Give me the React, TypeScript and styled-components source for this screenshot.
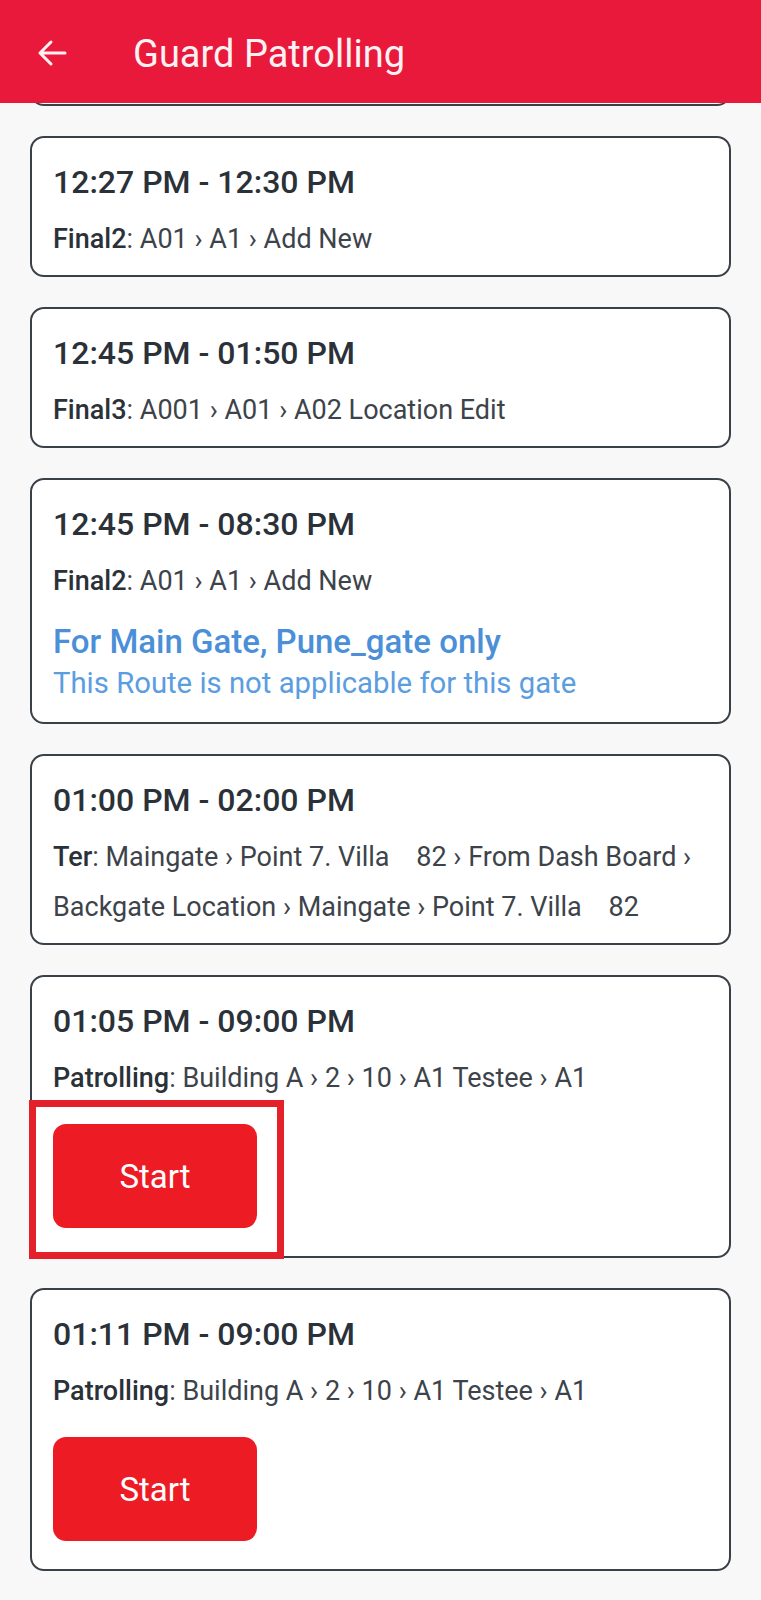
import styled, { createGlobalStyle } from "styled-components";

const GlobalStyle = createGlobalStyle`
  * {
    box-sizing: border-box;
  }
  body {
    margin: 0;
    background-color: #f8f8f8;
    font-family: Roboto, "Noto Sans", sans-serif;
  }
`;

const Page = styled.div`
  width: 761px;
  min-height: 1600px;
  background-color: #f8f8f8;
  overflow: hidden;
`;

const Header = styled.header`
  position: sticky;
  top: 0;
  z-index: 2;
  height: 103px;
  background-color: #e8193b;
  display: flex;
  align-items: center;
  padding-left: 37px;
`;

const BackButton = styled.button`
  width: 30px;
  height: 28px;
  padding: 0;
  border: none;
  background: transparent;
  display: flex;
  margin-top: 2px;
  cursor: pointer;
`;

const Title = styled.h1`
  margin: 4px 0 0 66px;
  font-size: 38px;
  font-weight: 400;
  color: #fdf1f3;
  line-height: 44px;
`;

const List = styled.main<{ $offset: number }>`
  display: flex;
  flex-direction: column;
  gap: 30px;
  padding: 0 30px 30px;
  margin-top: ${(props) => -props.$offset}px;
`;

const Card = styled.section`
  position: relative;
  background-color: #ffffff;
  border: 2px solid #3a4047;
  border-radius: 14px;
  padding: 24px 21px 11px;
`;

// the card scrolled up under the app bar; only its lower edge shows
const PeekCard = styled(Card)<{ $height: number }>`
  height: ${(props) => props.$height}px;
`;

const Time = styled.h3`
  margin: 0;
  font-size: 32px;
  font-weight: 500;
  line-height: 40px;
  color: #2b3138;
`;

const Route = styled.p`
  margin: 12px 0 0;
  font-size: 27px;
  line-height: 50px;
  color: #3d434a;
  white-space: pre-wrap;
`;

const RouteName = styled.span`
  font-weight: 500;
  color: #2b3138;
`;

const Notice = styled.div`
  margin: 16px 0 10px;
  color: #4a8fd8;
`;

const NoticeTitle = styled.div`
  font-size: 33px;
  font-weight: 500;
  line-height: 40px;
`;

const NoticeText = styled.div`
  margin-top: 3px;
  font-size: 29.3px;
  line-height: 36px;
  color: #5a9de0;
`;

const ButtonWrap = styled.div`
  position: relative;
  width: 204px;
  margin: 21px 0 17px;
`;

const StartButton = styled.button`
  width: 204px;
  height: 104px;
  border: none;
  border-radius: 13px;
  background-color: #ed1c24;
  color: #ffffff;
  font-family: Roboto, "Noto Sans", sans-serif;
  font-size: 33px;
  font-weight: 400;
  cursor: pointer;
`;

const Highlight = styled.div`
  position: absolute;
  top: -24px;
  left: -24px;
  right: -27px;
  bottom: -31px;
  border: 7px solid #e4202a;
  pointer-events: none;
`;

interface IRound {
  time: string;
  name: string;
  route: string;
  gate?: string;
  canStart?: boolean;
  highlighted?: boolean;
}

const rounds: IRound[] = [
  { time: "12:27 PM - 12:30 PM", name: "Final2", route: "A01 › A1 › Add New" },
  {
    time: "12:45 PM - 01:50 PM",
    name: "Final3",
    route: "A001 › A01 › A02 Location Edit",
  },
  {
    time: "12:45 PM - 08:30 PM",
    name: "Final2",
    route: "A01 › A1 › Add New",
    gate: "Main Gate, Pune_gate",
  },
  {
    time: "01:00 PM - 02:00 PM",
    name: "Ter",
    route:
      "Maingate › Point 7. Villa\u00a0\u00a0\u00a0 82 › From Dash Board › Backgate Location › Maingate › Point 7. Villa\u00a0\u00a0\u00a0 82",
  },
  {
    time: "01:05 PM - 09:00 PM",
    name: "Patrolling",
    route: "Building A › 2 › 10 › A1 Testee › A1",
    canStart: true,
    highlighted: true,
  },
  {
    time: "01:11 PM - 09:00 PM",
    name: "Patrolling",
    route: "Building A › 2 › 10 › A1 Testee › A1",
    canStart: true,
  },
];

function BackArrow() {
  return (
    <svg width="30" height="28" viewBox="0 0 30 28" fill="none">
      <path
        d="M28 14H3M14 3L3 14L14 25"
        stroke="#fdf1f3"
        strokeWidth="3"
        strokeLinecap="round"
        strokeLinejoin="round"
      />
    </svg>
  );
}

function RoundCard({ round }: { round: IRound }) {
  return (
    <Card>
      <Time>{round.time}</Time>
      <Route>
        <RouteName>{round.name}</RouteName>: {round.route}
      </Route>
      {round.gate && (
        <Notice>
          <NoticeTitle>For {round.gate} only</NoticeTitle>
          <NoticeText>This Route is not applicable for this gate</NoticeText>
        </Notice>
      )}
      {round.canStart && (
        <ButtonWrap>
          <StartButton>Start</StartButton>
          {round.highlighted && <Highlight />}
        </ButtonWrap>
      )}
    </Card>
  );
}

function App() {
  return (
    <Page>
      <GlobalStyle />
      <Header>
        <BackButton aria-label="Back">
          <BackArrow />
        </BackButton>
        <Title>Guard Patrolling</Title>
      </Header>
      <List $offset={138}>
        <PeekCard $height={141} />
        {rounds.map((round, i) => (
          <RoundCard key={i} round={round} />
        ))}
      </List>
    </Page>
  );
}

export default App;
